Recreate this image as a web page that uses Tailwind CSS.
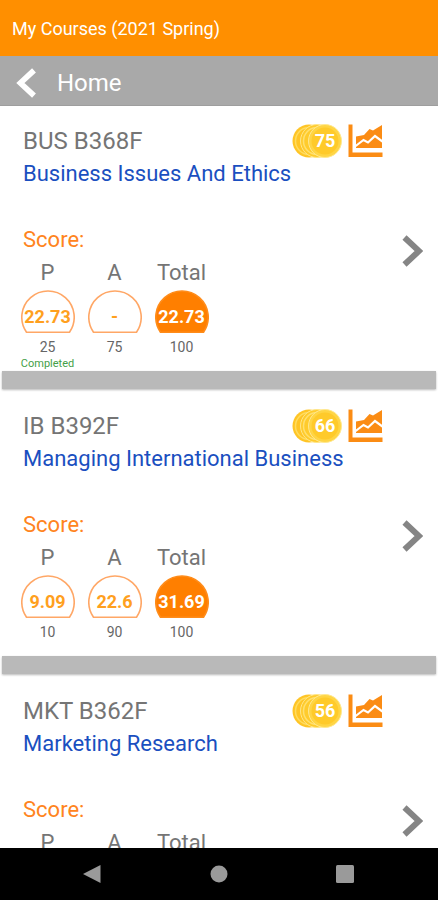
<!DOCTYPE html>
<html lang="en">
<head>
<meta charset="utf-8">
<meta name="viewport" content="width=device-width, initial-scale=1">
<title>My Courses</title>
<script src="https://cdn.jsdelivr.net/npm/@tailwindcss/browser@4"></script>
</head>
<body class="flex h-screen flex-col bg-white font-[Roboto,sans-serif] text-[#757575]">

<svg class="hidden" aria-hidden="true">
  <symbol id="coins" viewBox="0 0 50 34">
    <circle cx="17" cy="17" r="16.500" fill="#ffc526"/>
    <circle cx="17" cy="17" r="13.500" fill="none" stroke="#ffdc5e" stroke-width="1.500"/>
    <circle cx="25" cy="17" r="16.500" fill="#ffcb2c" stroke="#ffe68a" stroke-width="1"/>
    <circle cx="25" cy="17" r="13.500" fill="none" stroke="#ffe070" stroke-width="1.500"/>
    <circle cx="33" cy="17" r="16.500" fill="#ffd544" stroke="#ffe890" stroke-width="1"/>
    <circle cx="33" cy="17" r="13.500" fill="#ffca2a"/>
  </symbol>
  <symbol id="chart" viewBox="0 0 35 34">
    <path d="M0.500 0.500h4v28H34.500v4.500H0.500z" fill="#fb8c14"/>
    <path d="M8 12.500l8-1.500 5.500-6 3.500 1.500L34 1v23H8z" fill="#fb8c14"/>
    <path d="M7 22.500l8.500-6.500 4.500 2.500 7-6.500 7.500 5.500" fill="none" stroke="#fff" stroke-width="2.200"/>
  </symbol>
  <symbol id="dome" viewBox="0 0 54 43">
    <path d="M5.500 42.200A26.200 26.200 0 1 1 48.500 42.200z" stroke="#ffa766" stroke-width="1.600"/>
  </symbol>
  <symbol id="dome-filled" viewBox="0 0 54 43">
    <path d="M5.500 42.200A26.200 26.200 0 1 1 48.500 42.200z" fill="#ff7f00" stroke="#ff8c1a" stroke-width="1.600"/>
  </symbol>
  <symbol id="chevron" viewBox="0 0 21 32">
    <path d="M2.500 2.500L17 16 2.500 29.500" fill="none" stroke="currentColor" stroke-width="6"/>
  </symbol>
</svg>

<header class="shrink-0 text-white">
  <h1 class="flex h-14 items-center bg-[#ff8f00] px-3 pt-0.5 text-lg">My Courses (2021 Spring)</h1>
  <a href="#home" class="flex h-[50px] items-center gap-5 border-b border-[#9e9e9e] bg-[#a9a9a9] pt-1 pl-4 text-2xl">
    <svg class="h-[30px] w-[21px] rotate-180" aria-hidden="true"><use href="#chevron"/></svg>
    Home
  </a>
</header>

<main class="min-h-0 flex-1 overflow-y-auto [scrollbar-width:none]">

  <article class="flex min-h-[265px] pt-[19px]">
    <div class="flex-1 pl-[23px]">
      <div class="flex h-8 items-center">
        <h2 class="flex-1 text-2xl leading-8">BUS B368F</h2>
        <span class="mr-1.5 grid h-[34px] w-[50px] items-center">
          <svg class="col-start-1 row-start-1 h-[34px] w-[50px]" aria-hidden="true"><use href="#coins"/></svg>
          <span class="col-start-1 row-start-1 w-[50px] pl-4 text-center text-lg font-bold text-white">75</span>
        </span>
        <a href="#chart" aria-label="Score chart"><svg class="h-[34px] w-[35px]"><use href="#chart"/></svg></a>
      </div>
      <p class="pt-px text-[22px] leading-8 text-[#1a4fc0]">Business Issues And Ethics</p>
      <h3 class="mt-[34px] text-[22px] leading-8 text-[#ff8420]">Score:</h3>
      <table class="-ml-[9px] w-[201px] table-fixed text-center">
        <thead><tr class="text-[22px] leading-[34px]"><th class="p-0 font-normal">P</th><th class="p-0 font-normal">A</th><th class="p-0 font-normal">Total</th></tr></thead>
        <tbody>
          <tr class="text-lg font-bold text-[#ffa01e]">
            <td class="p-0"><div class="grid justify-items-center"><svg class="col-start-1 row-start-1 h-[43px] w-[54px] fill-white"><use href="#dome"/></svg><span class="col-start-1 row-start-1 pt-[13px]">22.73</span></div></td>
            <td class="p-0"><div class="grid justify-items-center"><svg class="col-start-1 row-start-1 h-[43px] w-[54px] fill-white"><use href="#dome"/></svg><span class="col-start-1 row-start-1 pt-[13px]">-</span></div></td>
            <td class="p-0 text-white"><div class="grid justify-items-center"><svg class="col-start-1 row-start-1 h-[43px] w-[54px]"><use href="#dome-filled"/></svg><span class="col-start-1 row-start-1 pt-[13px]">22.73</span></div></td>
          </tr>
          <tr class="text-sm leading-5 text-[#666]"><td class="p-0 pt-1">25</td><td class="p-0 pt-1">75</td><td class="p-0 pt-1">100</td></tr>
          <tr class="text-[11px] leading-[13px] text-[#43a047]"><td class="p-0">Completed</td><td class="p-0"></td><td class="p-0"></td></tr>
        </tbody>
      </table>
    </div>
    <a href="#bus-b368f" aria-label="Open BUS B368F" class="flex w-[55px] items-center pt-1.5 pl-[19px] text-[#858585]"><svg class="h-8 w-[21px]"><use href="#chevron"/></svg></a>
  </article>
  <div class="mx-0.5 mb-0.5 h-[18px] bg-[#b9b9b9] shadow-[0_1px_2px_#b9b9b9]"></div>

  <article class="flex min-h-[265px] pt-[19px]">
    <div class="flex-1 pl-[23px]">
      <div class="flex h-8 items-center">
        <h2 class="flex-1 text-2xl leading-8">IB B392F</h2>
        <span class="mr-1.5 grid h-[34px] w-[50px] items-center">
          <svg class="col-start-1 row-start-1 h-[34px] w-[50px]" aria-hidden="true"><use href="#coins"/></svg>
          <span class="col-start-1 row-start-1 w-[50px] pl-4 text-center text-lg font-bold text-white">66</span>
        </span>
        <a href="#chart" aria-label="Score chart"><svg class="h-[34px] w-[35px]"><use href="#chart"/></svg></a>
      </div>
      <p class="pt-px text-[22px] leading-8 text-[#1a4fc0]">Managing International Business</p>
      <h3 class="mt-[34px] text-[22px] leading-8 text-[#ff8420]">Score:</h3>
      <table class="-ml-[9px] w-[201px] table-fixed text-center">
        <thead><tr class="text-[22px] leading-[34px]"><th class="p-0 font-normal">P</th><th class="p-0 font-normal">A</th><th class="p-0 font-normal">Total</th></tr></thead>
        <tbody>
          <tr class="text-lg font-bold text-[#ffa01e]">
            <td class="p-0"><div class="grid justify-items-center"><svg class="col-start-1 row-start-1 h-[43px] w-[54px] fill-white"><use href="#dome"/></svg><span class="col-start-1 row-start-1 pt-[13px]">9.09</span></div></td>
            <td class="p-0"><div class="grid justify-items-center"><svg class="col-start-1 row-start-1 h-[43px] w-[54px] fill-white"><use href="#dome"/></svg><span class="col-start-1 row-start-1 pt-[13px]">22.6</span></div></td>
            <td class="p-0 text-white"><div class="grid justify-items-center"><svg class="col-start-1 row-start-1 h-[43px] w-[54px]"><use href="#dome-filled"/></svg><span class="col-start-1 row-start-1 pt-[13px]">31.69</span></div></td>
          </tr>
          <tr class="text-sm leading-5 text-[#666]"><td class="p-0 pt-1">10</td><td class="p-0 pt-1">90</td><td class="p-0 pt-1">100</td></tr>
        </tbody>
      </table>
    </div>
    <a href="#ib-b392f" aria-label="Open IB B392F" class="flex w-[55px] items-center pt-1.5 pl-[19px] text-[#858585]"><svg class="h-8 w-[21px]"><use href="#chevron"/></svg></a>
  </article>
  <div class="mx-0.5 mb-0.5 h-[18px] bg-[#b9b9b9] shadow-[0_1px_2px_#b9b9b9]"></div>

  <article class="flex min-h-[265px] pt-[19px]">
    <div class="flex-1 pl-[23px]">
      <div class="flex h-8 items-center">
        <h2 class="flex-1 text-2xl leading-8">MKT B362F</h2>
        <span class="mr-1.5 grid h-[34px] w-[50px] items-center">
          <svg class="col-start-1 row-start-1 h-[34px] w-[50px]" aria-hidden="true"><use href="#coins"/></svg>
          <span class="col-start-1 row-start-1 w-[50px] pl-4 text-center text-lg font-bold text-white">56</span>
        </span>
        <a href="#chart" aria-label="Score chart"><svg class="h-[34px] w-[35px]"><use href="#chart"/></svg></a>
      </div>
      <p class="pt-px text-[22px] leading-8 text-[#1a4fc0]">Marketing Research</p>
      <h3 class="mt-[34px] text-[22px] leading-8 text-[#ff8420]">Score:</h3>
      <table class="-ml-[9px] w-[201px] table-fixed text-center">
        <thead><tr class="text-[22px] leading-[34px]"><th class="p-0 font-normal">P</th><th class="p-0 font-normal">A</th><th class="p-0 font-normal">Total</th></tr></thead>
      </table>
    </div>
    <a href="#mkt-b362f" aria-label="Open MKT B362F" class="flex w-[55px] items-center pt-1.5 pl-[19px] text-[#858585]"><svg class="h-8 w-[21px]"><use href="#chevron"/></svg></a>
  </article>
</main>

<nav class="flex h-[52px] shrink-0 items-center justify-between bg-black pr-[84px] pl-[83px]">
  <button aria-label="Back"><svg class="size-[18px] fill-[#9a9a9a]" viewBox="0 0 18 18"><path d="M17.500 0v18L0 9z"/></svg></button>
  <button aria-label="Home"><svg class="size-[18px] fill-[#9a9a9a]" viewBox="0 0 18 18"><circle cx="9" cy="9" r="8.500"/></svg></button>
  <button aria-label="Recent apps"><svg class="size-[18px] fill-[#9a9a9a]" viewBox="0 0 18 18"><rect width="18" height="18" rx="1.500"/></svg></button>
</nav>
</body>
</html>
